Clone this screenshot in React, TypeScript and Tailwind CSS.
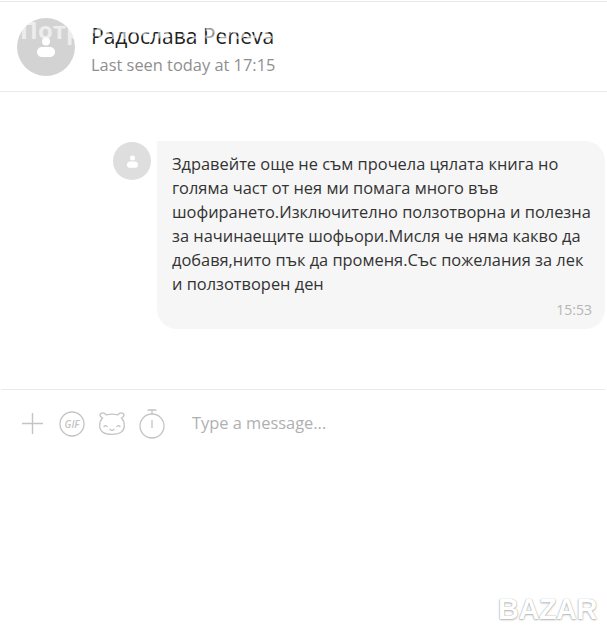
function UserGlyph({ size }: { size: number }) {
  return (
    <svg width={size} height={size} viewBox="0 0 24 24" fill="#ffffff">
      <circle cx="12" cy="6.500" r="4" />
      <path d="M8 12h8c3 0 5 2.200 5 5s-2 5-5 5H8c-3 0-5-2.200-5-5s2-5 5-5z" />
    </svg>
  );
}

function PlusIcon() {
  return (
    <svg width="21" height="21" viewBox="0 0 21 21" stroke="#c4c4c4" strokeWidth="1.4" fill="none">
      <path d="M0 10.500h21M10.500 0v21" />
    </svg>
  );
}

function GifIcon() {
  return (
    <svg width="26" height="26" viewBox="0 0 26 26" fill="none">
      <circle cx="13" cy="13" r="12" stroke="#c4c4c4" strokeWidth="1.3" />
      <text x="13" y="16.500" textAnchor="middle" fontSize="10" fontStyle="italic" fontWeight="600" fontFamily="'Open Sans', sans-serif" fill="#c4c4c4">
        GIF
      </text>
    </svg>
  );
}

function BearIcon() {
  return (
    <svg width="26" height="23" viewBox="0 0 26 23" fill="none" stroke="#c4c4c4" strokeWidth="1.3" strokeLinecap="round">
      <path d="M3.500 6C1 5 .2 2.600 2 1.400 4 .4 6 1.200 7 2.800c4-.8 8-.8 12 0 1-1.600 3-2.400 5-1.400 1.800 1.200 1 3.600-1.500 4.600 1.500 1.500 2.800 4 2.800 7.500 0 6.500-4.800 8.800-12.300 8.800S.7 20 .7 13.500C.7 10 2 7.500 3.500 6z" />
      <path d="M5 14.500c1-1.200 2-1.200 3 0M18 14.500c1-1.200 2-1.200 3 0M11 17.500c1.200 1 2.800 1 4 0" />
    </svg>
  );
}

function TimerIcon() {
  return (
    <svg width="26" height="30" viewBox="0 0 26 30" fill="none" stroke="#c4c4c4" strokeWidth="1.3">
      <circle cx="13" cy="17" r="12" />
      <path d="M8.500 1h9M13 1v4M13 11v8" />
    </svg>
  );
}

function ChatHeader() {
  return (
    <header className="mt-[1px] flex h-[91px] items-center gap-[16px] border-y border-[#e8ebed] pl-[17px] pt-[1px]">
      <div className="flex h-[58px] w-[58px] items-center justify-center rounded-full bg-[#d3d3d3]">
        <UserGlyph size={24} />
      </div>
      <div className="flex flex-col pt-[4px]">
        <span className="text-[21px] leading-[28px] text-[#222222]">Радослава Peneva</span>
        <span className="mt-[3px] text-[16.400px] leading-[24px] text-[#8f8f8f]">Last seen today at 17:15</span>
      </div>
    </header>
  );
}

function Message() {
  return (
    <div className="flex items-start gap-[6px] pl-[113px] pr-[2px] pt-[49px]">
      <div className="mt-[1px] flex h-[38px] w-[38px] shrink-0 items-center justify-center rounded-full bg-[#dedede]">
        <UserGlyph size={15} />
      </div>
      <div className="h-[188px] flex-1 rounded-[20px] rounded-tl-none bg-[#f6f6f6] pl-[15px] pr-[10px] pt-[11px]">
        <p className="text-[16.400px] leading-[24px] text-[#333333]">
          Здравейте още не съм прочела цялата книга но голяма част от нея ми помага много във
          шофирането.Изключително ползотворна и полезна за начинаещите шофьори.Мисля че няма какво да
          добавя,нито пък да променя.Със пожелания за лек и ползотворен ден
        </p>
        <p className="mt-[4px] pr-[3px] text-right text-[14px] leading-[20px] text-[#b5b5b5]">15:53</p>
      </div>
    </div>
  );
}

function Composer() {
  return (
    <div className="ml-[1px] mr-[2px] mt-[60px] flex h-[68px] items-center border-t border-[#e8ebed] pl-[21px]">
      <PlusIcon />
      <div className="ml-[16px] flex items-center gap-[14px]">
        <GifIcon />
        <BearIcon />
        <TimerIcon />
      </div>
      <span className="ml-[27px] text-[16.400px] text-[#b0b0b0]">Type a message...</span>
    </div>
  );
}

export default function App() {
  return (
    <div className="relative h-[634px] w-[607px] overflow-hidden bg-white font-['Open_Sans',sans-serif]">
      <ChatHeader />
      <Message />
      <Composer />
      <span className="absolute left-[20px] top-[12px] whitespace-nowrap text-[24px] font-bold text-white/60">
        Потребител 1959852
      </span>
      <span className="absolute left-[498px] top-[588px] font-['Liberation_Sans',sans-serif] text-[29px] font-bold tracking-[-0.5px] text-white [text-shadow:0_0_1px_#999999,0_1px_2px_#b5b5b5]">
        BAZAR
      </span>
    </div>
  );
}
